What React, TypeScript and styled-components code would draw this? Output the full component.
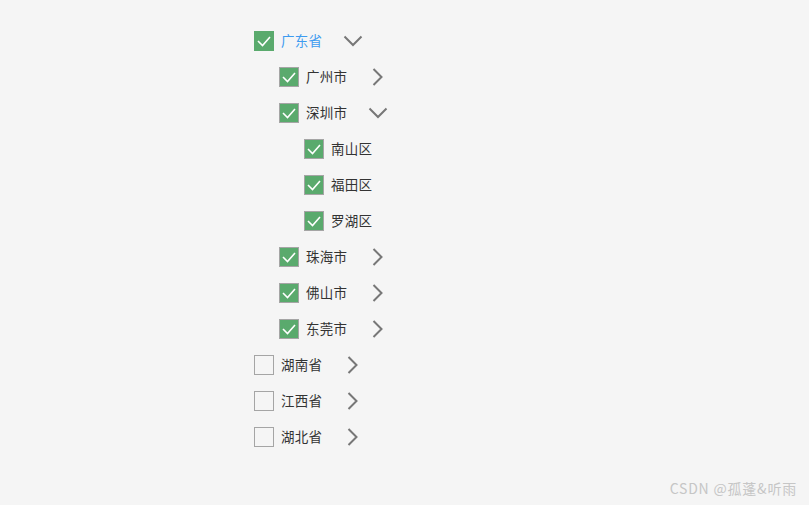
import React from "react";
import styled, { createGlobalStyle } from "styled-components";

const Global = createGlobalStyle`
  html, body { margin: 0; padding: 0; background: #f5f5f5; }
  body { font-family: "Noto Sans CJK SC", "Noto Sans", sans-serif; }
`;

type Node = { label: string; checked: boolean; expanded?: boolean; active?: boolean; children?: Node[] };

const tree: Node[] = [
  {
    label: "广东省",
    checked: true,
    expanded: true,
    active: true,
    children: [
      { label: "广州市", checked: true, children: [] },
      {
        label: "深圳市",
        checked: true,
        expanded: true,
        children: [
          { label: "南山区", checked: true },
          { label: "福田区", checked: true },
          { label: "罗湖区", checked: true },
        ],
      },
      { label: "珠海市", checked: true, children: [] },
      { label: "佛山市", checked: true, children: [] },
      { label: "东莞市", checked: true, children: [] },
    ],
  },
  { label: "湖南省", checked: false, children: [] },
  { label: "江西省", checked: false, children: [] },
  { label: "湖北省", checked: false, children: [] },
];

const Page = styled.div`
  position: relative;
  width: 809px;
  height: 505px;
  background: #f5f5f5;
  box-sizing: border-box;
  padding: 23px 0 0 254px;
`;

const Tree = styled.div`
  display: flex;
  flex-direction: column;
`;

const Row = styled.div<{ $level: number }>`
  display: flex;
  align-items: center;
  height: 36px;
  padding-left: ${(p) => p.$level * 25}px;
`;

const Box = styled.span<{ $checked: boolean; $active?: boolean }>`
  box-sizing: border-box;
  width: 20px;
  height: 20px;
  flex: none;
  display: flex;
  align-items: center;
  justify-content: center;
  background: ${(p) => (p.$checked ? "#5aaa6d" : "#f5f5f5")};
  border: 1px solid ${(p) => (p.$active ? "#5aaa6d" : "#a5a5a5")};
`;

const Label = styled.span<{ $active?: boolean }>`
  margin-left: 7px;
  padding-bottom: 2px;
  font-size: 13.5px;
  line-height: 20px;
  letter-spacing: 0.3px;
  color: ${(p) => (p.$active ? "#3d9bf0" : "#333333")};
`;

const Toggle = styled.span`
  margin-left: 21px;
  width: 20px;
  height: 20px;
  display: flex;
  align-items: center;
  justify-content: center;
`;

const Watermark = styled.div`
  position: absolute;
  right: 12px;
  bottom: 7px;
  font-size: 14px;
  letter-spacing: 0.8px;
  color: #c6c6c6;
  font-family: "Noto Sans CJK SC", "Noto Sans", sans-serif;
`;

const Check = () => (
  <svg width="18" height="18" viewBox="0 0 18 18">
    <polyline points="3,9 7.5,13.5 15,5" fill="none" stroke="#ffffff" strokeWidth="1.6" />
  </svg>
);

const Chevron = ({ down }: { down: boolean }) => (
  <svg width="20" height="20" viewBox="0 0 20 20">
    {down ? (
      <polyline points="1.5,5.5 10,14 18.5,5.5" fill="none" stroke="#777777" strokeWidth="2" />
    ) : (
      <polyline points="5.5,2 13.5,10 5.5,18" fill="none" stroke="#777777" strokeWidth="2" />
    )}
  </svg>
);

const renderNodes = (nodes: Node[], level: number): React.ReactNode[] =>
  nodes.flatMap((n) => {
    const row = (
      <Row key={`${level}-${n.label}`} $level={level}>
        <Box $checked={n.checked} $active={n.active}>{n.checked && <Check />}</Box>
        <Label $active={n.active}>{n.label}</Label>
        {n.children && (
          <Toggle>
            <Chevron down={!!n.expanded} />
          </Toggle>
        )}
      </Row>
    );
    const kids = n.expanded && n.children ? renderNodes(n.children, level + 1) : [];
    return [row, ...kids];
  });

export default function App() {
  return (
    <Page>
      <Global />
      <Tree>{renderNodes(tree, 0)}</Tree>
      <Watermark>CSDN @孤蓬&amp;听雨</Watermark>
    </Page>
  );
}
